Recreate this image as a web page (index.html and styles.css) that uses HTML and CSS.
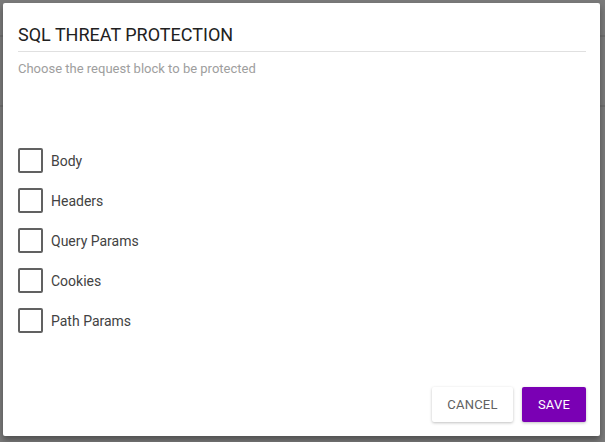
FILE: index.html
```html
<!DOCTYPE html>
<html>
<head>
<meta charset="utf-8">
<link rel="stylesheet" href="styles.css">
</head>
<body>
<div class="backdrop">
  <div class="bg-line bg-line-top"></div>
  <div class="bg-line bg-line-mid"></div>
  <div class="dialog">
    <div class="header">
      <h1 class="title">SQL THREAT PROTECTION</h1>
    </div>
    <p class="subtitle">Choose the request block to be protected</p>
    <ul class="options">
      <li class="option"><span class="box"></span><span class="label">Body</span></li>
      <li class="option"><span class="box"></span><span class="label">Headers</span></li>
      <li class="option"><span class="box"></span><span class="label">Query Params</span></li>
      <li class="option"><span class="box"></span><span class="label">Cookies</span></li>
      <li class="option"><span class="box"></span><span class="label">Path Params</span></li>
    </ul>
    <div class="actions">
      <button class="btn btn-cancel">CANCEL</button>
      <button class="btn btn-save">SAVE</button>
    </div>
  </div>
</div>
</body>
</html>
```
FILE: styles.css
```css
* { box-sizing: border-box; }
html, body { margin: 0; padding: 0; }
body {
  width: 605px;
  height: 442px;
  overflow: hidden;
  font-family: Roboto, "Liberation Sans", sans-serif;
  background: #7a7a7a;
}
.backdrop {
  position: relative;
  width: 605px;
  height: 442px;
  padding: 3px 5px 6px 3px;
}
.bg-line {
  position: absolute;
  left: 0;
  right: 0;
  height: 2px;
  background: #6e6e6e;
}
.bg-line-top { top: 35px; }
.bg-line-mid { top: 105px; }
.dialog {
  position: relative;
  width: 597px;
  height: 433px;
  background: #ffffff;
  border-radius: 2px;
  box-shadow: 0 4px 6px rgba(0,0,0,0.35);
  padding: 0 14px 0 15px;
  display: flex;
  flex-direction: column;
}
.header {
  border-bottom: 1px solid #e0e0e0;
  padding-top: 22px;
  height: 49px;
}
.title {
  margin: 0;
  font-size: 18px;
  font-weight: 400;
  color: #212121;
  line-height: 20px;
  letter-spacing: 0;
}
.subtitle {
  margin: 9px 0 0 0;
  font-size: 13px;
  line-height: 16px;
  color: #9e9e9e;
}
.options {
  list-style: none;
  margin: 71px 0 0 0;
  padding: 0;
  display: flex;
  flex-direction: column;
  gap: 15px;
}
.option {
  display: flex;
  align-items: center;
  height: 25px;
}
.box {
  width: 25px;
  height: 25px;
  border: 2px solid #616161;
  border-radius: 2px;
  flex: none;
}
.label {
  margin-left: 8px;
  margin-top: 1px;
  font-size: 14px;
  color: #424242;
  line-height: 16px;
}
.actions {
  margin-top: auto;
  margin-bottom: 14px;
  display: flex;
  justify-content: flex-end;
  gap: 9px;
  padding-right: 0;
}
.btn {
  height: 35px;
  border: none;
  border-radius: 2px;
  font-family: Roboto, "Liberation Sans", sans-serif;
  font-size: 13px;
  letter-spacing: 0.2px;
  padding: 0;
  cursor: pointer;
}
.btn-cancel {
  width: 81px;
  background: #ffffff;
  color: #616161;
  box-shadow: 0 1px 3px rgba(0,0,0,0.25);
}
.btn-save {
  width: 64px;
  background: #7a00b4;
  color: #ffffff;
  box-shadow: 0 1px 3px rgba(0,0,0,0.25);
}
```
